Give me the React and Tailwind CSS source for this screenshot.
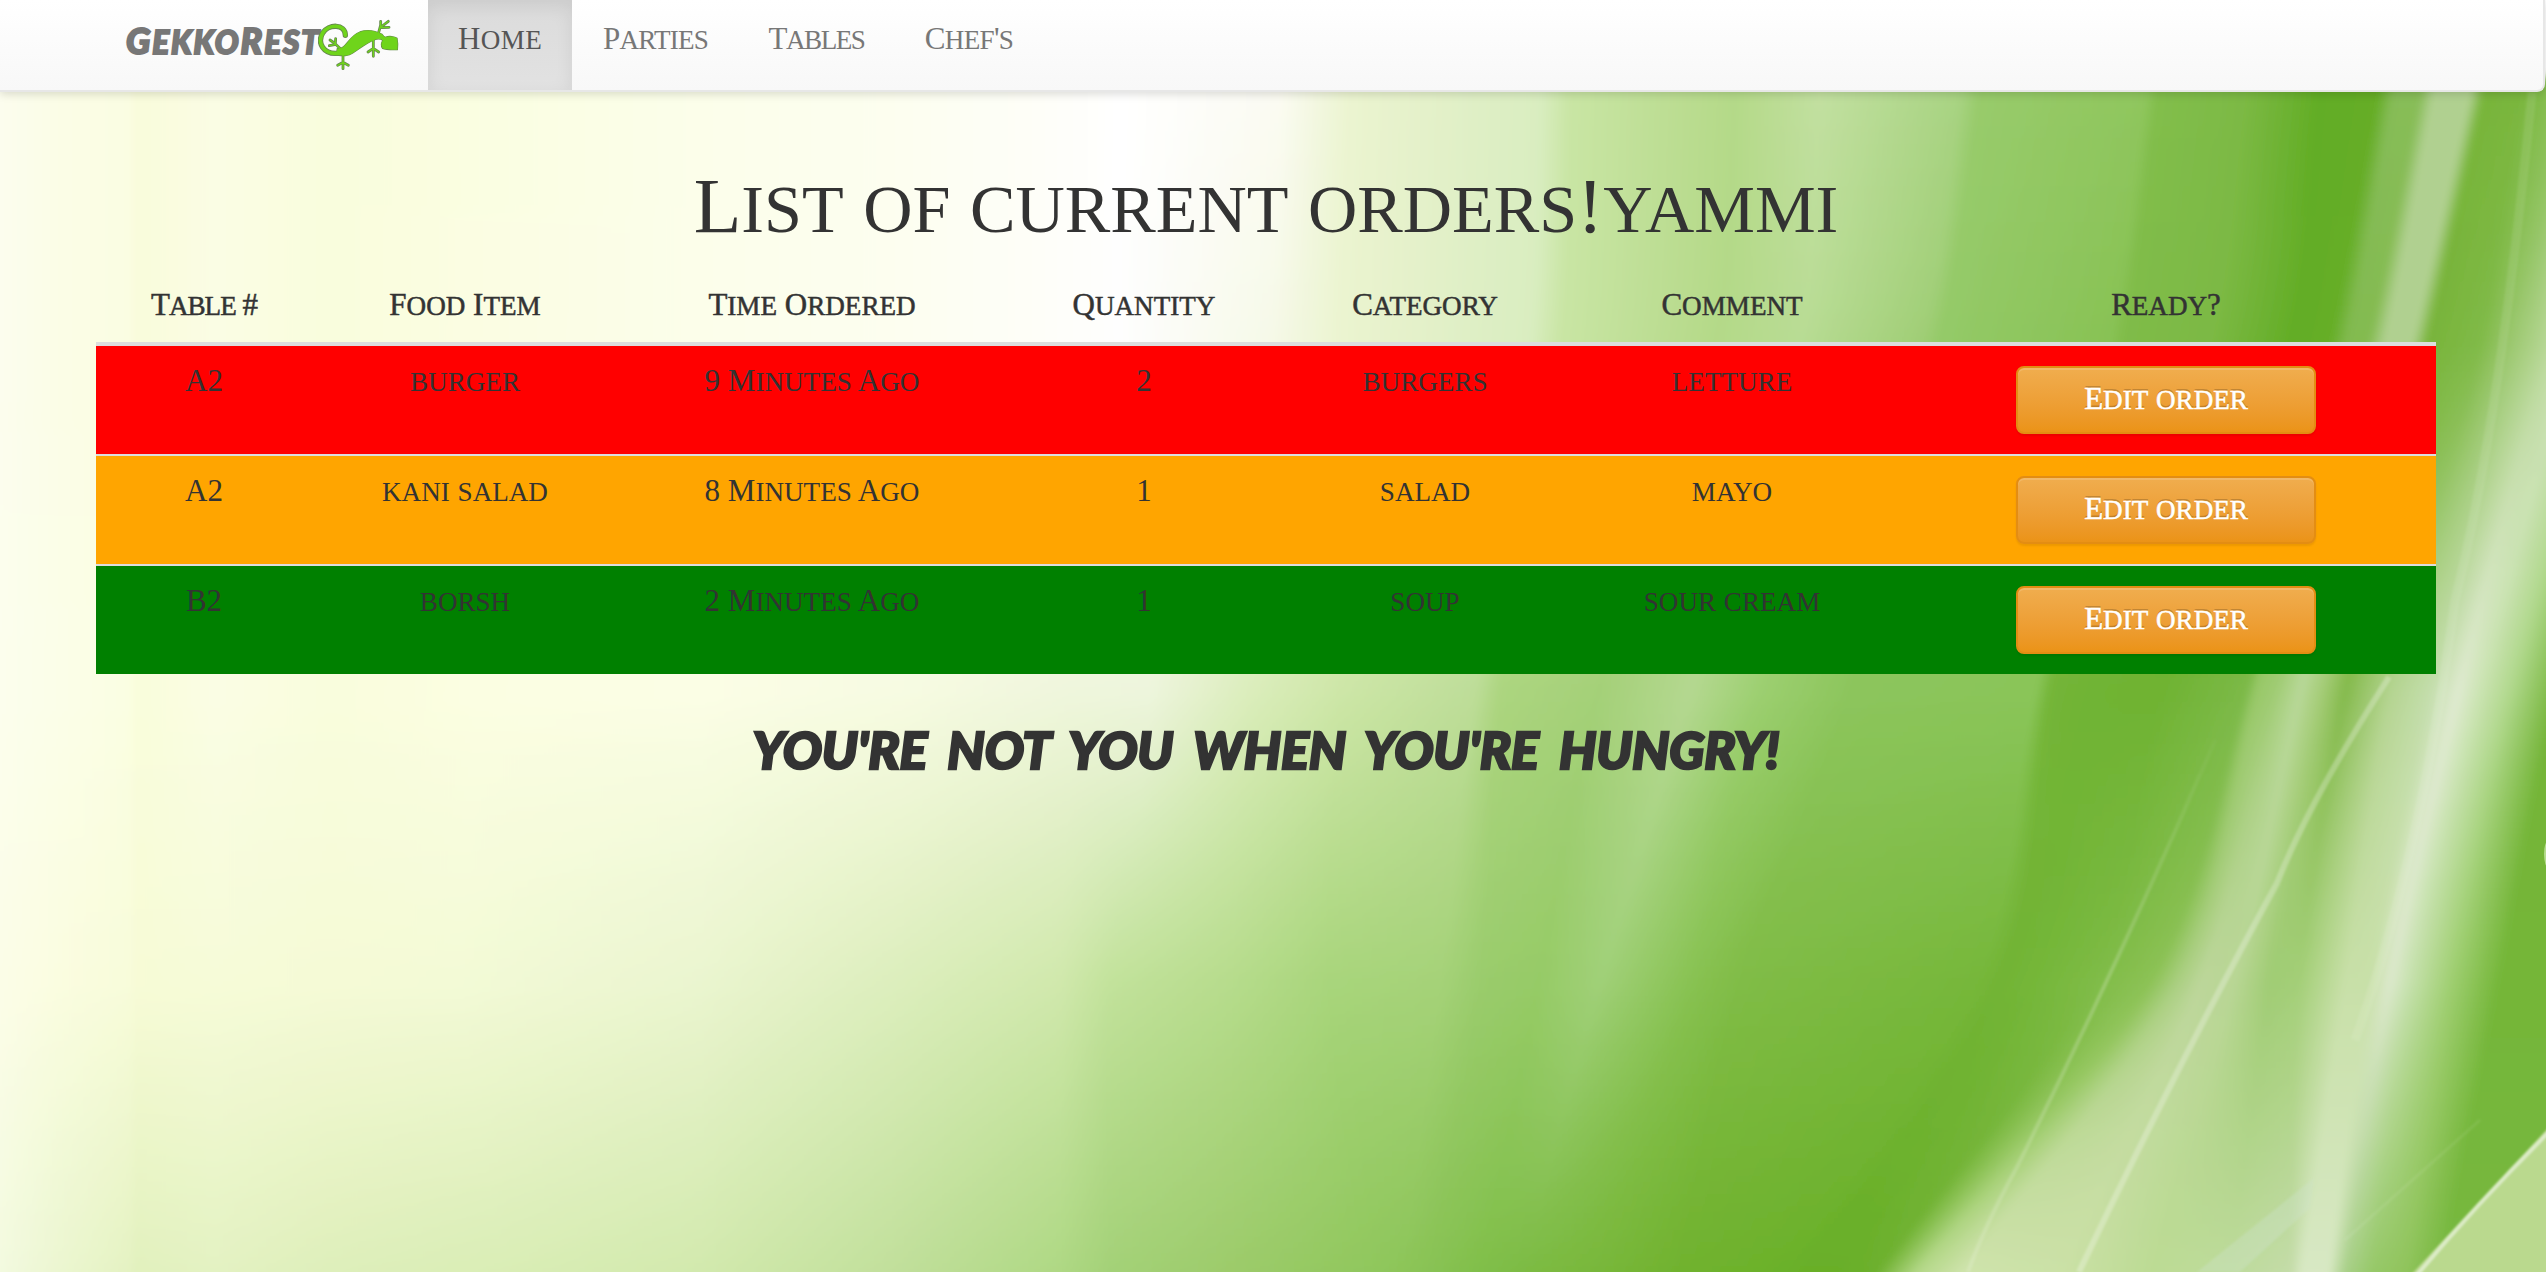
import React from "react";

const SERIF = "font-['Liberation_Serif',serif]";
const MARKER = "font-['Lato',sans-serif]";

// Small capitals: lower-case runs are set as slightly shorter capitals.
function Caps({ children }) {
  return children.split(/([a-z]+)/).map((part, i) =>
    /^[a-z]/.test(part) ? (
      <span key={i} className="text-[0.875em] leading-none uppercase">{part}</span>
    ) : (
      part
    )
  );
}

// Ribbons of the backdrop. Each one is followed down the page through five
// levels; every level gives its x position and its colour.
const LEVELS = [92, 340, 690, 980, 1272];
const RIBBONS = [
  [[-40, "fdfef3"], [-40, "fdfef3"], [-40, "fdfef0"], [-40, "fdfeec"], [-40, "f8fcea"]],
  [[60, "fbfde6"], [60, "fbfde6"], [60, "fbfee8"], [60, "fafde0"], [60, "ebf6d0"]],
  [[130, "fafde2"], [130, "fafde2"], [130, "fafee2"], [130, "f8fcda"], [130, "e4f2c2"]],
  [[136, "f9fcdb"], [136, "f9fcdb"], [136, "f9fddb"], [136, "f7fbd6"], [136, "e1f1bd"]],
  [[215, "fafde4"], [215, "fafde4"], [215, "fafde4"], [215, "f6fbd8"], [215, "e3f2c2"]],
  [[330, "f9fddd"], [330, "f9fddd"], [330, "f9fddd"], [330, "f5fad6"], [330, "deefba"]],
  [[500, "fafee2"], [500, "fbfde3"], [480, "fbfee2"], [460, "f3fad6"], [500, "d9edb5"]],
  [[700, "fcfeea"], [700, "fcfeea"], [700, "fbfee5"], [700, "eaf5cf"], [700, "d2e9ad"]],
  [[900, "fdfef0"], [900, "fdfef0"], [900, "f7fbe2"], [900, "dceebc"], [900, "c0df9a"]],
  [[1070, "fefefa"], [1070, "fefefa"], [1070, "eff6dc"], [1060, "d0e8ac"], [1060, "aed883"]],
  [[1120, "ffffff"], [1120, "fefefe"], [1150, "edf5dc"], [1110, "c2e29b"], [1110, "a3d177"]],
  [[1280, "fbfbf2"], [1270, "f6f9e8"], [1250, "dbedbb"], [1230, "b6dc8c"], [1230, "9ccb6a"]],
  [[1350, "ebf4d0"], [1340, "ebf4d0"], [1340, "cde6a7"], [1330, "a8d57b"], [1370, "90c75c"]],
  [[1540, "d9edc0"], [1530, "d9edc0"], [1475, "bddd98"], [1440, "a5d278"], [1400, "8cc558"]],
  [[1570, "c9e5a4"], [1560, "c9e5a4"], [1500, "acd57f"], [1480, "9acc6c"], [1430, "88c253"]],
  [[1735, "b4d988"], [1715, "b4d988"], [1600, "a4d078"], [1540, "96cb66"], [1480, "80bf49"]],
  [[1820, "c2e0a0"], [1800, "b8dc94"], [1690, "b4d890"], [1600, "a0d078"], [1520, "7cbb43"]],
  [[1960, "a8d382"], [1920, "a0ce76"], [1760, "9ccf70"], [1690, "88c252"], [1600, "78b73a"]],
  [[1980, "98cb6b"], [1940, "94ca68"], [1850, "8cc55c"], [1740, "80bc46"], [1680, "70b22e"]],
  [[2145, "8fc65d"], [2110, "88c254"], [2035, "8ac559"], [1975, "76b73a"], [1780, "6bb12a"]],
  [[2158, "82be4c"], [2125, "7fbb48"], [2050, "74b538"], [1998, "72b435"], [1800, "69af28"]],
  [[2245, "7cb944"], [2210, "7cb944"], [2090, "70b434"], [2030, "74b638"], [1835, "69af28"]],
  [[2320, "62ad25"], [2290, "63ad26"], [2160, "6fb332"], [2090, "7ebb46"], [1875, "6db02e"]],
  [[2378, "66ad28"], [2330, "66ae28"], [2245, "7cb948"], [2150, "8cc255"], [1915, "b4d888"]],
  [[2394, "86bc58"], [2347, "82ba50"], [2256, "98c868"], [2175, "a8ce7e"], [1960, "cfe3ac"]],
  [[2420, "88bd58"], [2368, "84bb50"], [2275, "a0cc74"], [2200, "bcd69a"], [2060, "cbe1a6"]],
  [[2434, "b0d090"], [2385, "b0d090"], [2300, "b8d898"], [2235, "b8d694"], [2150, "bcdb94"]],
  [[2470, "b0d090"], [2412, "b0d090"], [2322, "a4cc76"], [2270, "a0cc74"], [2230, "bedb9c"]],
  [[2484, "78b53a"], [2428, "78b43a"], [2345, "84ba4c"], [2300, "a4cf78"], [2290, "c4dca8"]],
  [[2520, "7ab63e"], [2480, "80ba48"], [2390, "b4d490"], [2345, "c8e0a8"], [2302, "d8e8c4"]],
  [[2575, "90c460"], [2512, "9cc870"], [2430, "c4deac"], [2370, "c8e0a8"], [2328, "d8e8c4"]],
  [[2625, "b8d898"], [2550, "b8d898"], [2458, "dfead0"], [2390, "dce8cc"], [2345, "a8d088"]],
  [[2640, "b8d898"], [2575, "c8e0b0"], [2478, "cce4b4"], [2408, "c8e2b0"], [2372, "96c868"]],
  [[2700, "a4d078"], [2620, "b0d88c"], [2510, "b0d88c"], [2450, "a0cf72"], [2405, "90c45c"]],
  [[2760, "74b438"], [2680, "74b438"], [2560, "74b438"], [2500, "74b638"], [2440, "78b840"]],
];

const channels = (hex) => [0, 2, 4].map((i) => parseInt(hex.slice(i, i + 2), 16));

function stopAt(ribbon, y) {
  let k = 0;
  while (k < 3 && y > LEVELS[k + 1]) k++;
  const h = LEVELS[k + 1] - LEVELS[k];
  const t = Math.max(0, Math.min(1, (y - LEVELS[k]) / h));
  const slope = (j) => {
    const a = Math.max(0, j - 1);
    const b = Math.min(4, j + 1);
    return (ribbon[b][0] - ribbon[a][0]) / (LEVELS[b] - LEVELS[a]);
  };
  const x =
    (2 * t ** 3 - 3 * t ** 2 + 1) * ribbon[k][0] +
    (t ** 3 - 2 * t ** 2 + t) * h * slope(k) +
    (-2 * t ** 3 + 3 * t ** 2) * ribbon[k + 1][0] +
    (t ** 3 - t ** 2) * h * slope(k + 1);
  const c1 = channels(ribbon[k + 1][1]);
  const rgb = channels(ribbon[k][1]).map((c, i) => Math.round(c + (c1[i] - c) * t));
  return { x, color: `rgb(${rgb.join(",")})` };
}

const STEP = 6;
const ROWS = Array.from({ length: 202 }, (_, i) => 78 + i * STEP);

function Backdrop() {
  return (
    <svg className="absolute inset-0 -z-10" width="2546" height="1272" viewBox="0 0 2546 1272" aria-hidden="true">
      <defs>
        {ROWS.map((y) => (
          <linearGradient key={y} id={`row${y}`} gradientUnits="userSpaceOnUse" x1="-60" x2="2800" y1="0" y2="0">
            {RIBBONS.map((r, i) => {
              const s = stopAt(r, y);
              return <stop key={i} offset={(s.x + 60) / 2860} stopColor={s.color} />;
            })}
          </linearGradient>
        ))}
        <linearGradient id="fade" gradientUnits="userSpaceOnUse" x1="0" x2="0" y1="700" y2="1272">
          <stop offset="0" stopColor="#fff" stopOpacity="0" />
          <stop offset="0.5" stopColor="#fff" stopOpacity="0.2" />
          <stop offset="1" stopColor="#fff" stopOpacity="0.14" />
        </linearGradient>
        <filter id="soften" x="-2%" y="-2%" width="104%" height="104%">
          <feGaussianBlur stdDeviation="3 4" />
        </filter>
        <filter id="glow" x="-30%" y="-10%" width="160%" height="120%">
          <feGaussianBlur stdDeviation="1.2" />
        </filter>
      </defs>
      <g filter="url(#soften)">
        {ROWS.map((y) => (
          <rect key={y} x="-60" y={y} width="2700" height={STEP + 1} fill={`url(#row${y})`} />
        ))}
      </g>
      <g filter="url(#glow)" fill="none" stroke="#fff">
        <path d="M2389 677 Q2310 800 2277 883 Q2180 1060 2079 1272" strokeWidth="6" strokeOpacity="0.26" />
        <path d="M2215 740 Q2120 960 2017 1167 Q1985 1225 1968 1272" stroke="url(#fade)" strokeWidth="4" />
        <path d="M2532 92 Q2500 420 2455 600 Q2420 860 2355 1040" strokeWidth="9" strokeOpacity="0.09" />
        <path d="M2197 1272 L2314 1178 L2310 1208 L2240 1272Z" fill="#cfe2cc" fillOpacity="0.35" stroke="none" />
        <path d="M2345 1240 L2480 1120" strokeWidth="3" strokeOpacity="0.08" />
        <path d="M2550 1126 L2406 1280 L2550 1280Z" fill="#bad98e" stroke="none" />
        <path d="M2550 1131 Q2480 1200 2416 1276" strokeWidth="4" strokeOpacity="0.5" />
      </g>
      <ellipse cx="2548" cy="854" rx="4" ry="13" fill="#b5dc8d" />
    </svg>
  );
}

function Gecko() {
  const tail = "M136 91 C136 55 85 57 68 84 C50 115 72 146 108 145 Q122 145 135 138";
  const body =
    "M112 131 C140 134 142 96 180 81 C202 73 225 77 246 88 Q252 96 256 97 C268 92 284 95 291 100 Q294 116 292 134 C275 134 258 135 248 130 Q240 118 249 106 C240 100 232 101 224 104 C200 113 180 130 158 144 C145 154 128 152 110 150 Z";
  const limbs =
    "M125 135 L104 115 M104 119 L88 122 M103 114 L90 105 M106 115 L107 101 M129 148 V191 M129 172 L113 181 M129 172 L145 181 M236 82 L242 60 M242 68 L242 49 M243 66 L265 49 M244 68 L267 67 M220 105 L220 127 M220 127 V154 M220 130 L204 141 M220 130 L236 141";
  return (
    <svg className="-ml-1.5 h-[52px] w-[81px]" viewBox="54 42 243 156" fill="none" strokeLinecap="round" strokeLinejoin="round" aria-hidden="true">
      <g stroke="#66864f">
        <path d={tail} strokeWidth="16" />
        <path d={limbs} strokeWidth="8.5" />
        <path d={body} strokeWidth="4" />
      </g>
      <g stroke="#6fd41b">
        <path d={tail} strokeWidth="11" />
        <path d={limbs} strokeWidth="4" />
        <path d={body} fill="#6fd41b" strokeWidth="0.5" />
      </g>
    </svg>
  );
}

const COLUMNS = ["Table #", "Food Item", "Time Ordered", "Quantity", "Category", "Comment", "Ready?"];
const ORDERS = [
  { tone: "bg-[#ff0000]", cells: ["A2", "burger", "9 Minutes Ago", "2", "burgers", "letture"] },
  { tone: "bg-[#ffa500] border-t-2 border-[#ddd]", cells: ["A2", "kani salad", "8 Minutes Ago", "1", "salad", "mayo"] },
  { tone: "bg-[#008000] border-t-2 border-[#ddd]", cells: ["B2", "borsh", "2 Minutes Ago", "1", "soup", "sour cream"] },
];
const GRID = "grid grid-cols-[216px_306px_388px_276px_286px_328px_540px] text-center text-[31px] leading-10";

function NavItem({ active, spacing, children }) {
  return (
    <a
      className={
        `flex justify-center pt-[18px] text-[31px] leading-[42px] ${spacing} ` +
        (active
          ? "bg-linear-to-b from-[#dbdbdb] to-[#e2e2e2] text-[#555] shadow-[inset_0_6px_18px_rgba(0,0,0,0.075)]"
          : "text-[#777]")
      }
    >
      <span><Caps>{children}</Caps></span>
    </a>
  );
}

export default function App() {
  return (
    <div className={`relative isolate h-[1272px] w-[2546px] overflow-hidden text-[#333] ${SERIF}`}>
      <Backdrop />
      <nav className="flex h-[92px] w-[2545px] rounded-br-lg border-r-2 border-b-2 border-[#e7e7e7] bg-linear-to-b from-white to-[#f8f8f8] shadow-[0_2px_10px_rgba(0,0,0,0.15)]">
        <div className="flex w-[428px] items-start pt-[19px] pl-[126px]">
          <span className={`w-[198px] text-[36px] leading-[43px] font-black tracking-[1.9px] whitespace-nowrap text-[#777] italic [-webkit-text-stroke:2px_#777] ${MARKER}`}>
            <Caps>GekkoRest</Caps>
          </span>
          <Gecko />
        </div>
        <NavItem active spacing="w-36 tracking-[0.4px]">Home</NavItem>
        <NavItem spacing="w-[167px] tracking-[-0.8px]">Parties</NavItem>
        <NavItem spacing="w-[155px] tracking-[-1.5px]">Tables</NavItem>
        <NavItem spacing="w-[150px] tracking-[-0.7px]">Chef's</NavItem>
      </nav>
      <main className="ml-24 w-[2340px]">
        <h1 className="pt-[71px] text-center text-[78px] leading-[86px]">
          <Caps>List of current orders!yammi</Caps>
        </h1>
        <div className={`${GRID} mt-[36px] h-[61px] border-b-4 border-[#ddd] [-webkit-text-stroke:0.5px_#333]`}>
          {COLUMNS.map((c) => (
            <div key={c} className={c === "Table #" ? "tracking-[-1px]" : ""}><Caps>{c}</Caps></div>
          ))}
        </div>
        {ORDERS.map((o, i) => (
          <div key={i} className={`${GRID} ${o.tone} ${i ? "h-[110px]" : "h-[108px]"}`}>
            {o.cells.map((c, j) => (
              <div key={j} className="pt-[15px]"><Caps>{c}</Caps></div>
            ))}
            <div className="flex justify-center pt-5">
              <button className="h-[68px] w-[300px] rounded-lg border-2 border-[#e38d13] bg-linear-to-b from-[#f0ad4e] to-[#eb9316] pb-0.5 text-white shadow-[inset_0_2px_0_rgba(255,255,255,0.15),0_2px_2px_rgba(0,0,0,0.075)] [-webkit-text-stroke:0.5px_#fff] [text-shadow:0_-2px_0_rgba(0,0,0,0.2)]">
                <Caps>Edit order</Caps>
              </button>
            </div>
          </div>
        ))}
        <p className={`mt-[43px] text-center text-[52px] leading-[64px] font-black tracking-[-0.2px] uppercase italic [-webkit-text-stroke:2.5px_#333] [word-spacing:0.18em] ${MARKER}`}>
          you're not you when you're hungry!
        </p>
      </main>
    </div>
  );
}
